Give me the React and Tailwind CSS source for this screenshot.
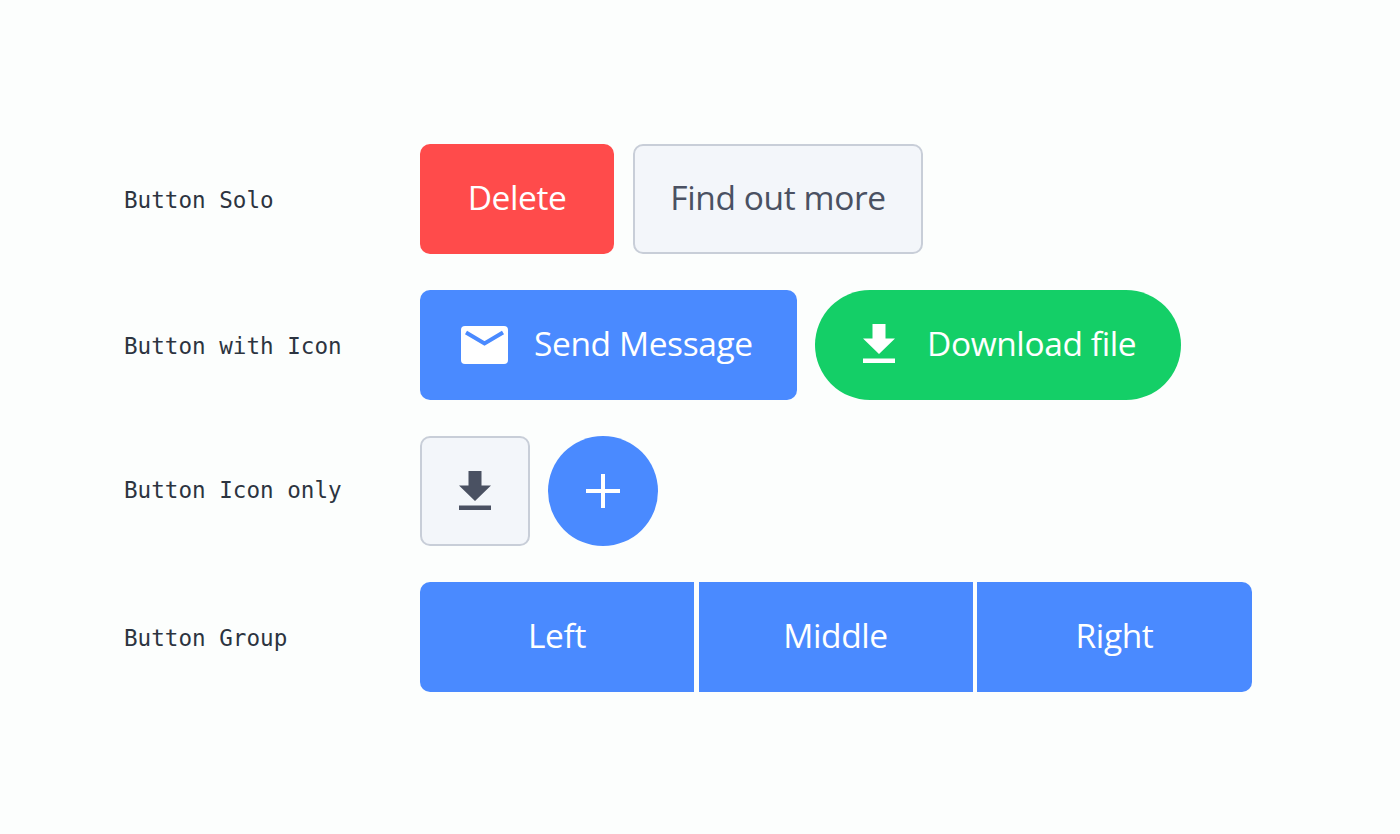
const DownloadIcon = ({ className }) => (
  <svg className={className} viewBox="0 0 32 39" fill="currentColor">
    <path d="M9.5 0h13v14.5H32L16 30 0 14.5h9.5z" />
    <rect x="0" y="34.5" width="32" height="4.5" />
  </svg>
);

const MailIcon = () => (
  <svg className="w-[47px] h-[38px] shrink-0" viewBox="0 0 47 38">
    <rect width="47" height="38" rx="4" fill="#ffffff" />
    <path d="M5 6.5l18.5 11 18.5-11" fill="none" stroke="#4a8aff" strokeWidth="4" />
  </svg>
);

const Text = ({ children }) => <span className="block pb-[3px]">{children}</span>;

const Row = ({ label, labelPad = 'pt-[2px]', children }) => (
  <div className="flex items-center h-[110px]">
    <div className={`w-[296px] pl-[124px] box-content shrink-0 text-[22.6px] leading-none whitespace-pre text-[#2c3440] font-['DejaVu_Sans_Mono',monospace] ${labelPad}`}>
      {label}
    </div>
    <div className="flex gap-[18px] h-full text-[33.5px] tracking-[-0.4px] font-['Open_Sans',sans-serif]">{children}</div>
  </div>
);

export default function App() {
  return (
    <div className="min-h-screen bg-[#fcfefd] pt-[144px] flex flex-col gap-[36px]">
      <Row label="Button Solo">
        <button className="w-[194px] rounded-[10px] bg-[#ff4b4b] text-white"><Text>Delete</Text></button>
        <button className="w-[290px] ml-[1px] rounded-[10px] border-2 border-[#c8ced8] bg-[#f3f6fa] text-[#4a5162]"><Text>Find out more</Text></button>
      </Row>
      <Row label="Button with Icon">
        <button className="w-[377px] rounded-[10px] bg-[#4a8aff] text-white flex items-center gap-[26px] pl-[41px]">
          <MailIcon />
          <Text>Send Message</Text>
        </button>
        <button className="w-[366px] rounded-full bg-[#14cf67] text-white flex items-center gap-[32px] pl-[48px]">
          <DownloadIcon className="w-[32px] h-[39px] shrink-0 mb-[3px]" />
          <Text>Download file</Text>
        </button>
      </Row>
      <Row label="Button Icon only" labelPad="pb-[2px]">
        <button className="w-[110px] rounded-[10px] border-2 border-[#c8ced8] bg-[#f3f6fa] text-[#4a5162] flex items-center justify-center">
          <DownloadIcon className="w-[32px] h-[39px] mb-[2px]" />
        </button>
        <button className="w-[110px] rounded-full bg-[#4a8aff] text-white flex items-center justify-center">
          <svg className="w-[34px] h-[34px]" viewBox="0 0 34 34" fill="currentColor">
            <path d="M15 0h4v15h15v4H19v15h-4V19H0v-4h15z" />
          </svg>
        </button>
      </Row>
      <Row label="Button Group">
        <div className="flex gap-[4.5px] text-white">
          <button className="w-[274px] rounded-l-[10px] bg-[#4a8aff]"><Text>Left</Text></button>
          <button className="w-[274px] bg-[#4a8aff]"><Text>Middle</Text></button>
          <button className="w-[275px] rounded-r-[10px] bg-[#4a8aff]"><Text>Right</Text></button>
        </div>
      </Row>
    </div>
  );
}
